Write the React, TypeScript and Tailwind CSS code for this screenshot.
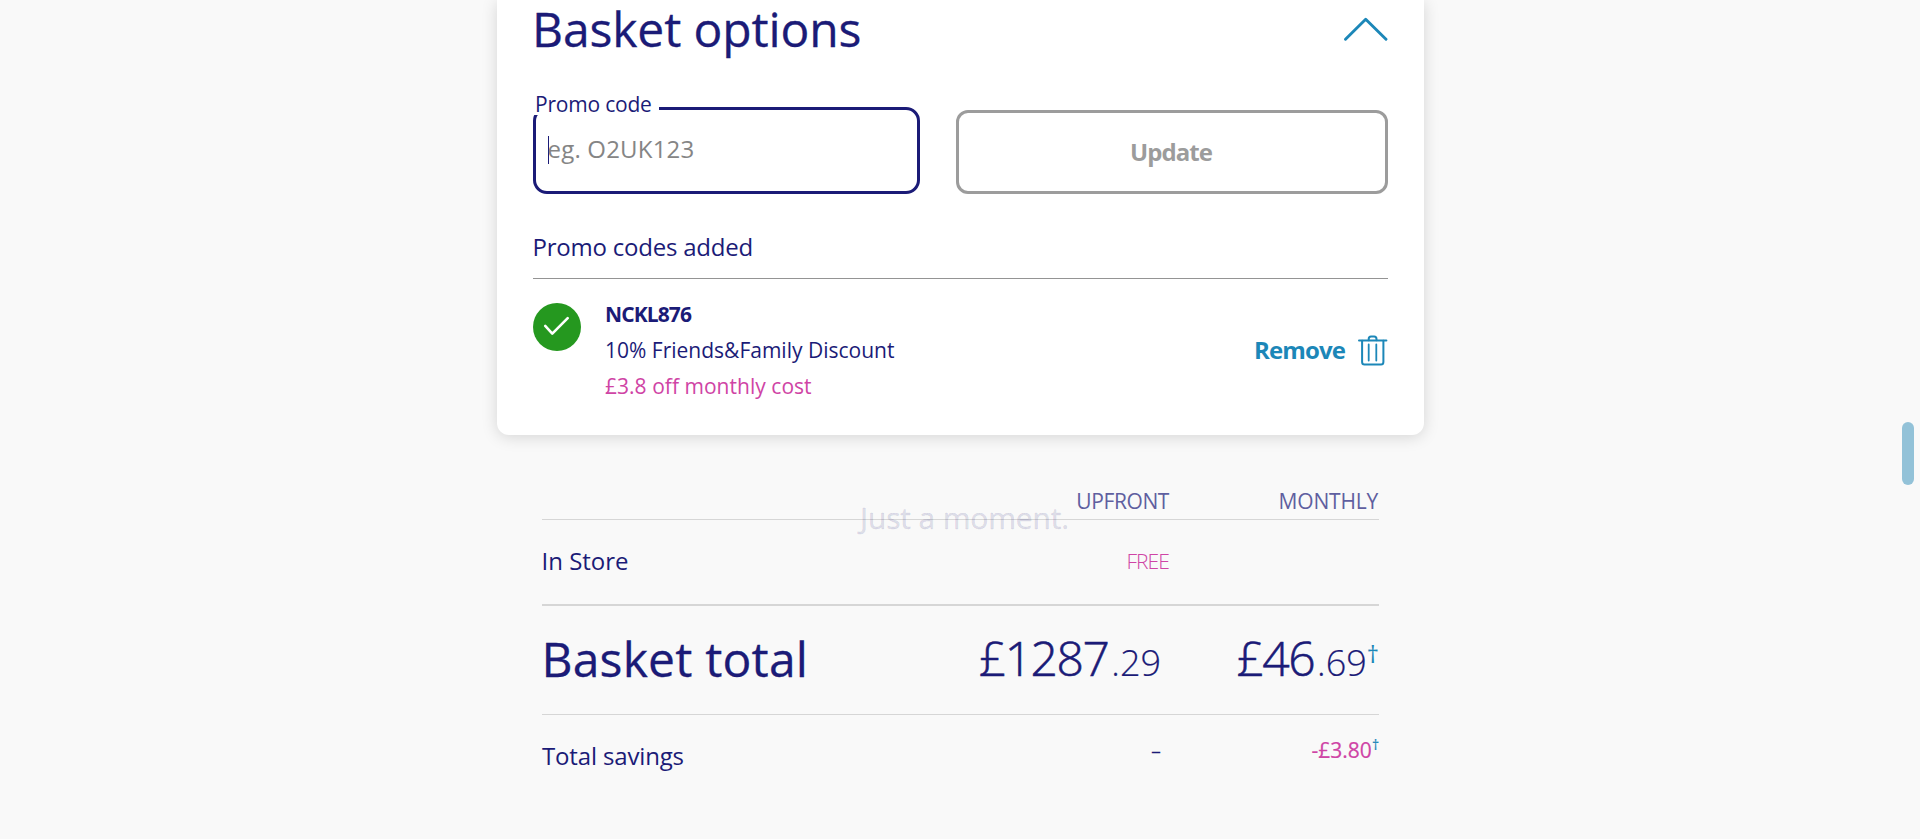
import React from 'react';

function ChevronUp() {
  return (
    <svg width="44" height="24" viewBox="0 0 44 24" fill="none" stroke="#1c87b8" strokeWidth="2.9" strokeLinecap="round" strokeLinejoin="round">
      <path d="M1.5 22.3 21.7 2.2 42 22.3" />
    </svg>
  );
}

function Check() {
  return (
    <svg width="48" height="48" viewBox="0 0 48 48" fill="none">
      <circle cx="24" cy="24" r="24" fill="#25981f" />
      <path d="M12.2 22.9 19.3 30.6 34.7 15.2" stroke="#fff" strokeWidth="2.6" strokeLinecap="round" strokeLinejoin="round" />
    </svg>
  );
}

function Trash() {
  return (
    <svg width="30" height="31" viewBox="0 0 30 31" fill="none" stroke="#1c87b8" strokeWidth="2" strokeLinecap="round" strokeLinejoin="round">
      <path d="M1 5.5H28.4" />
      <path d="M10.7 5.2V4C10.7 2.4 11.6 1.5 13 1.5H16.2C17.6 1.5 18.5 2.4 18.5 4V5.2" />
      <path d="M4.1 5.7V27C4.1 28.8 4.9 29.5 6.5 29.5H23C24.6 29.5 25.4 28.8 25.4 27V5.7" />
      <path d="M10.7 9.5V25.5M18.3 9.5V25.5" strokeWidth="1.8" />
    </svg>
  );
}

function Amount({ pounds, pence }: { pounds: string; pence: string }) {
  return (
    <>
      <span className="mr-[3px] text-5xl leading-[60px] tracking-[-1.5px] [-webkit-text-stroke:0.6px_#1b1b77]">{pounds}</span>
      <span className="text-4xl leading-[60px] [-webkit-text-stroke:0.2px_#1b1b77]">{pence}</span>
    </>
  );
}

export default function App() {
  return (
    <div className="relative flex h-[839px] flex-col overflow-hidden bg-[#f9f9f9] pl-[497px] font-['Open_Sans',sans-serif] text-[#1b1b77]">
      <section className="h-[435px] w-[927px] shrink-0 rounded-b-xl bg-white px-9 shadow-[0_2px_16px_rgba(0,0,0,0.15)]">
        <div className="flex h-[107px] justify-between">
          <h1 className="text-5xl leading-[58px] tracking-[-0.12px] [-webkit-text-stroke:0.3px_#1b1b77] [text-indent:-1px]">Basket options</h1>
          <div className="pt-[17px]">
            <ChevronUp />
          </div>
        </div>

        <div className="flex items-end justify-between">
          <div className="relative flex h-[87px] w-[387px] items-center rounded-[14px] border-[3px] border-[#1b1b77] pb-[3px] pl-3">
            <label className="absolute -top-[18px] -left-[3px] h-[23px] w-[126px] bg-white pl-[2px] text-[21px] leading-[25px] tracking-[-0.2px] whitespace-nowrap">
              Promo code
            </label>
            <span className="mt-0.5 h-7 w-px bg-[#1b1b77]" />
            <span className="-ml-[1.5px] text-2xl leading-8 tracking-[0.19px] text-[#858585]">eg. O2UK123</span>
          </div>
          <button className="h-[84px] w-[432px] rounded-xl border-[3px] border-[#9c9c9c] pr-[2px] pb-px text-2xl leading-8 font-bold tracking-[-0.9px] text-[#9c9c9c]">
            Update
          </button>
        </div>

        <h2 className="border-b border-[#949494] pt-[37px] pb-[15px] text-2xl leading-8 tracking-[-0.22px] [text-indent:-0.5px]">Promo codes added</h2>

        <div className="flex">
          <div className="w-[72px] pt-6">
            <Check />
          </div>
          <div className="flex-1 pt-[17px] text-[21px] leading-9">
            <p className="font-bold tracking-[-0.9px]">NCKL876</p>
            <p>10% Friends&amp;Family Discount</p>
            <p className="tracking-[0.03px] text-[#cf44a5]">£3.8 off monthly cost</p>
          </div>
          <button className="flex h-[143px] items-center gap-[13px] text-[#1c87b8]">
            <span className="pb-px text-2xl font-bold tracking-[-0.9px]">Remove</span>
            <Trash />
          </button>
        </div>
      </section>

      <section className="mt-[47px] ml-[45px] w-[837px]">
        <div className="flex h-[38px] border-b border-[#d6d6d6] text-right text-[21px] leading-[38px] text-[#5f5fa0]">
          <span className="w-[628px] pr-px tracking-[-0.4px]">UPFRONT</span>
          <span className="w-[209px] pr-px tracking-[-0.2px]">MONTHLY</span>
        </div>
        <div className="flex h-[86px] items-center border-b-2 border-[#d6d6d6] pb-[2px]">
          <span className="w-[300px] text-2xl [text-indent:-0.5px]">In Store</span>
          <span className="w-[328px] pt-px pr-px text-right text-[21px] font-light tracking-[-0.9px] text-[#cf44a5]">FREE</span>
        </div>
        <div className="flex h-[109px] items-center border-b border-[#d6d6d6] pb-[2px]">
          <span className="w-[300px] text-5xl leading-[60px] tracking-[0.2px] [-webkit-text-stroke:0.3px_#1b1b77] [text-indent:-0.5px]">Basket total</span>
          <span className="flex w-[328px] items-baseline justify-end pt-[3px] pr-[9px] font-light">
            <Amount pounds="£1287" pence=".29" />
          </span>
          <span className="flex w-[209px] items-baseline justify-end pt-[3px] font-light">
            <Amount pounds="£46" pence=".69" />
            <span className="relative -top-[13px] text-2xl leading-none font-normal text-[#1c87b8]">†</span>
          </span>
        </div>
        <div className="flex items-start pt-[21px]">
          <span className="w-[300px] text-2xl leading-10 tracking-[-0.15px]">Total savings</span>
          <span className="w-[328px] pr-[9px] text-right text-xl leading-[30px]">–</span>
          <span className="flex w-[209px] items-baseline justify-end text-[21px] leading-[29px] text-[#cf44a5] [-webkit-text-stroke:0.2px]">
            -£3.80
            <span className="relative -top-[8px] text-sm leading-none text-[#1c87b8]">†</span>
          </span>
        </div>
      </section>

      <div className="absolute top-[498px] left-[860px] text-3xl leading-10 tracking-[-0.15px] whitespace-nowrap text-[#1b1b77]/12 [-webkit-text-stroke:0.6px]">
        Just a moment.
      </div>
      <div className="absolute top-[422px] left-[1902px] h-[63px] w-3 rounded-full bg-[#93c2d8]" />
    </div>
  );
}
